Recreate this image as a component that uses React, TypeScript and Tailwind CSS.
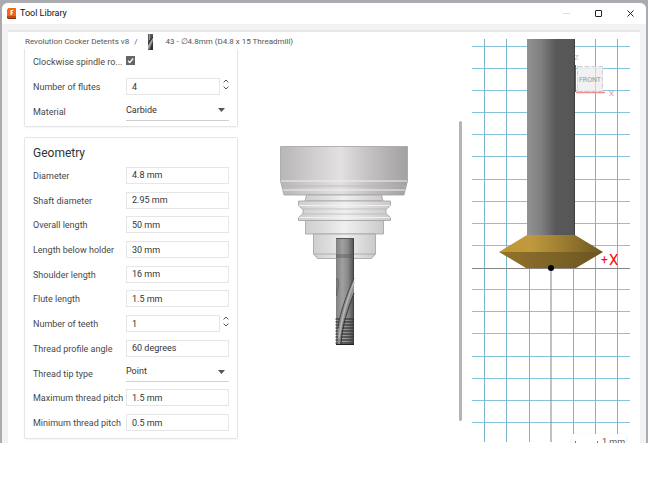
import React, { useState } from "react";

const inputClass =
  "h-[17px] min-w-0 flex-1 border border-[#e6e6e6] bg-white px-[5px] text-[9px] text-[#333] outline-none";

function Row({ id, label, children }: { id: string; label: string; children: React.ReactNode }) {
  return (
    <div className="grid grid-cols-[93px_1fr] items-center">
      <label htmlFor={id} className="whitespace-nowrap pt-px text-[9px] leading-[14px] text-[#484848]">
        {label}
      </label>
      <div className="flex min-w-0 items-center">{children}</div>
    </div>
  );
}

function TextRow({ id, label, value }: { id: string; label: string; value: string }) {
  return (
    <Row id={id} label={label}>
      <input id={id} defaultValue={value} className={inputClass} />
    </Row>
  );
}

function CheckRow({ id, label }: { id: string; label: string }) {
  return (
    <Row id={id} label={label}>
      <div className="grid pb-0.5">
        <input
          id={id}
          type="checkbox"
          defaultChecked
          className="peer col-start-1 row-start-1 size-[9px] appearance-none border border-[#666] bg-white checked:bg-[#666]"
        />
        <svg
          width="9"
          height="9"
          viewBox="0 0 9 9"
          className="pointer-events-none invisible col-start-1 row-start-1 peer-checked:visible"
        >
          <path d="M2 4.700 3.800 6.500 7.200 2.500" fill="none" stroke="#fff" strokeWidth="1.300" />
        </svg>
      </div>
    </Row>
  );
}

function NumberRow({ id, label, initial }: { id: string; label: string; initial: number }) {
  const [value, setValue] = useState(initial);
  return (
    <Row id={id} label={label}>
      <input
        id={id}
        value={value}
        onChange={(e) => setValue(Number(e.target.value) || 0)}
        className={inputClass}
      />
      <div className="flex w-[9px] flex-col items-end gap-[3px] pb-1">
        <button aria-label={`Increase ${label}`} onClick={() => setValue(value + 1)}>
          <svg width="6" height="4" viewBox="0 0 6 4" className="block">
            <path d="M.6 3.400 3 1l2.400 2.400" fill="none" stroke="#555" strokeWidth="1" />
          </svg>
        </button>
        <button aria-label={`Decrease ${label}`} onClick={() => setValue(value - 1)}>
          <svg width="6" height="4" viewBox="0 0 6 4" className="block">
            <path d="M.6.6 3 3 5.400.6" fill="none" stroke="#555" strokeWidth="1" />
          </svg>
        </button>
      </div>
    </Row>
  );
}

function SelectRow({ id, label, options }: { id: string; label: string; options: string[] }) {
  return (
    <Row id={id} label={label}>
      <div className="grid flex-1 items-center border-b border-[#cfcfcf] pb-0.5">
        <select
          id={id}
          className="col-start-1 row-start-1 h-[15px] w-full appearance-none bg-transparent text-[9px] leading-[13px] text-[#333] outline-none"
        >
          {options.map((o) => (
            <option key={o}>{o}</option>
          ))}
        </select>
        <svg
          width="7"
          height="4"
          viewBox="0 0 7 4"
          className="pointer-events-none col-start-1 row-start-1 mr-1 justify-self-end"
        >
          <path d="M0 0h7L3.500 4z" fill="#555" />
        </svg>
      </div>
    </Row>
  );
}

function AppIcon() {
  return (
    <svg width="10" height="12" viewBox="0 0 10 12">
      <path d="M1.500 0H9v9H0V1.500z" fill="#f26a10" />
      <path d="M0 8.500h9V11H1.200L0 10z" fill="#8c2f06" />
      <path d="M1 9.300h8v.8H1z" fill="#e05a0c" />
      <path d="M3.500 2H6.300v1H4.700v1.200h1.300v1H4.700V7H3.500z" fill="#fff" />
    </svg>
  );
}

function ToolIcon() {
  return (
    <svg width="5" height="16" viewBox="0 0 5 16" className="block">
      <rect width="5" height="16" fill="#555" />
      <rect x="1" width="1" height="6" fill="#999" />
      <path d="M0 11 5 4v2L1 15H0z" fill="#a5a5a5" />
      <path d="M0 9 5 2v1L0 11zM2 16l3-8v8z" fill="#2e2e2e" />
    </svg>
  );
}

function HolderDrawing() {
  const threads = Array.from({ length: 9 }, (_, i) => 173 + i * 3);
  return (
    <svg width="128" height="200" viewBox="0 0 128 200" role="img" aria-label="Tool and holder">
      <defs>
        <linearGradient id="body">
          <stop offset="0" stopColor="#b7b5b5" />
          <stop offset=".25" stopColor="#cfcdcd" />
          <stop offset=".47" stopColor="#e2e0e0" />
          <stop offset=".7" stopColor="#c3c1c1" />
          <stop offset="1" stopColor="#a3a0a0" />
        </linearGradient>
        <linearGradient id="neck">
          <stop offset="0" stopColor="#d0cfcf" />
          <stop offset=".25" stopColor="#dedddd" />
          <stop offset=".5" stopColor="#f1f0f0" />
          <stop offset=".8" stopColor="#dad9d9" />
          <stop offset="1" stopColor="#cbc9c9" />
        </linearGradient>
        <linearGradient id="cutter">
          <stop offset="0" stopColor="#808080" />
          <stop offset=".35" stopColor="#a0a0a0" />
          <stop offset=".65" stopColor="#8a8a8a" />
          <stop offset=".92" stopColor="#5c5c5c" />
          <stop offset="1" stopColor="#333" />
        </linearGradient>
      </defs>
      <g stroke="#a3a1a1" strokeWidth=".8">
        <path d="M.5.500h127V35l-3.500 14H4L.5 35z" fill="url(#body)" />
        <path d="M26.500 49h75l1.500 6H25z" fill="url(#neck)" />
        <path d="M18.500 55h92v4.500L106 63.500v4l4.500 4v3H18.500v-3l4.500-4v-4l-4.500-4z" fill="url(#neck)" />
        <path d="M25.500 74.500h78V88h-78z" fill="url(#neck)" />
        <path d="M33.500 88h62v20l-4 4.500h-54l-4-4.500z" fill="url(#neck)" />
        <path d="M33.500 108h62" />
      </g>
      <path d="M1 35h126M3 44h122M19 59.500h91M19 71.500h91" stroke="#f1f1f1" strokeWidth="1.200" />
      <path d="M2 40h124M22 63h84M22 68h84" stroke="#b5b4b4" strokeWidth=".7" />
      <rect x="56" y="92" width="18" height="107" fill="url(#cutter)" />
      <path d="M56 92.500h18" stroke="#555" />
      <rect x="56" y="108" width="18" height="4" fill="#555" opacity=".4" />
      <path d="M57 132c3 4 1 12-.5 18z" fill="#8f8f8f" stroke="#555" strokeWidth=".6" />
      {threads.map((y) => (
        <path key={y} d={`M55.500 ${y}h18.500`} stroke="#333" strokeWidth="1.200" />
      ))}
      <path d="M74 132C67 148 60 166 58 184v15h2c1-21 7-36 14-50z" fill="#8e8e8e" />
      <path d="M74 132C67 148 60 166 58 182" fill="none" stroke="#444" strokeWidth="1" />
      <path d="M74 136C68 152 62 168 59 192" fill="none" stroke="#b5b5b5" strokeWidth="1.500" />
      <path d="M74 147C68 163 62 179 61 199" fill="none" stroke="#333" strokeWidth="1" />
      <path d="M56 198.500h18" stroke="#222" />
    </svg>
  );
}

function ToolPreview() {
  const rows = [8, 30, 52, 74, 96, 118, 141, 163, 185, 207, 251, 273, 295, 318, 340, 362, 384];
  const cols = [12, 34, 57, 101, 123, 145];
  return (
    <svg
      width="158"
      height="403"
      viewBox="0 0 158 403"
      role="img"
      aria-label="Front view"
      className="block font-[Roboto,sans-serif]"
    >
      <defs>
        <linearGradient id="shank">
          <stop offset="0" stopColor="#929292" />
          <stop offset=".3" stopColor="#7f7f7f" />
          <stop offset=".6" stopColor="#585858" />
          <stop offset=".97" stopColor="#565656" />
          <stop offset="1" stopColor="#333" />
        </linearGradient>
        <linearGradient id="goldTop">
          <stop offset="0" stopColor="#bd9636" />
          <stop offset=".3" stopColor="#c09a3c" />
          <stop offset=".65" stopColor="#98792f" />
          <stop offset="1" stopColor="#6e571f" />
        </linearGradient>
        <linearGradient id="goldBottom">
          <stop offset="0" stopColor="#94742a" />
          <stop offset=".4" stopColor="#836728" />
          <stop offset="1" stopColor="#6b5520" />
        </linearGradient>
      </defs>
      {rows.map((y) => (
        <path key={y} d={`M0 ${y - 0.5}h158`} stroke="#86c3dc" strokeWidth="1.200" />
      ))}
      {cols.map((x) => (
        <path key={x} d={`M${x + 0.5} 0v403`} stroke="#79b5cf" strokeWidth="1" />
      ))}
      <path d="M0 229.500h158M79 230v173" stroke="#858585" strokeWidth="1" />
      <rect x="105" y="28" width="26" height="24" fill="#efefef" opacity=".9" />
      <rect x="105.500" y="27.500" width="25" height="25" fill="none" stroke="#cfcfcf" strokeDasharray="5 2" />
      <path d="M123.500 28v24" stroke="#b9c8ce" strokeWidth=".6" />
      <text x="118" y="43" textAnchor="middle" fontSize="7" fill="#999">
        FRONT
      </text>
      <path d="M104 53.500h29" stroke="#f18c8c" strokeWidth="1.500" />
      <text x="137" y="57" fontSize="8" fill="#d99a8e">
        X
      </text>
      <text x="102" y="21" fontSize="8" fill="#a9b8df">
        Z
      </text>
      <rect x="55" y="0" width="48" height="197" fill="url(#shank)" />
      <path d="M103.500 26v27" stroke="#5252d8" />
      <path d="M55 196h48l28 17H27z" fill="url(#goldTop)" />
      <path d="M27 213h104l-27 16H54z" fill="url(#goldBottom)" />
      <circle cx="79" cy="229" r="3" fill="#000" />
      <text x="129" y="225" fontSize="12" fill="#f00d0d">
        +
      </text>
      <text x="137" y="226" fontSize="15" fill="#f00d0d">
        X
      </text>
    </svg>
  );
}

export default function App() {
  return (
    <div className="min-h-screen bg-white font-[Roboto,'Noto_Sans',sans-serif]">
      <div className="bg-[#a9abb1] px-[2px] pt-[3px]">
        <div className="overflow-hidden rounded-t-md bg-[#f3f2f2]">
          <header className="flex h-[21px] items-center bg-white pl-[5px]">
            <AppIcon />
            <h1 className="ml-[3px] flex-1 text-[9px] text-[#111]">Tool Library</h1>
            <div className="flex items-center gap-[25px] pr-3">
              <button aria-label="Minimize" disabled>
                <svg width="7" height="7" viewBox="0 0 7 7" className="block">
                  <path d="M0 3.500h7" stroke="#ddd" />
                </svg>
              </button>
              <button aria-label="Maximize">
                <svg width="7" height="7" viewBox="0 0 7 7" className="block">
                  <rect x=".5" y=".5" width="6" height="6" rx=".5" fill="none" stroke="#222" />
                </svg>
              </button>
              <button aria-label="Close">
                <svg width="7" height="7" viewBox="0 0 7 7" className="block">
                  <path d="M.5.5l6 6M6.500.5l-6 6" stroke="#222" />
                </svg>
              </button>
            </div>
          </header>
          <main className="mx-[6px] mt-[6px] flex overflow-hidden border-t-2 border-[#e6e6e6] bg-white">
            <div className="flex min-w-0 flex-1 flex-col">
              <nav
                aria-label="Breadcrumb"
                className="flex h-[18px] items-center pl-[17px] pt-0.5 text-[8px] text-[#555]"
              >
                <a href="#library">Revolution Cocker Detents v8</a>
                <span className="mx-[5px]">/</span>
                <span className="ml-[6px] mr-[12px]">
                  <ToolIcon />
                </span>
                <span>43 - ∅4.8mm (D4.8 x 15 Threadmill)</span>
              </nav>
              <div className="flex flex-1">
                <form className="w-[246px] shrink-0 px-4 pb-1" onSubmit={(e) => e.preventDefault()}>
                  <section className="-mt-px grid auto-rows-[25px] rounded-b-xs border border-t-0 border-[#e6e6e6] px-2 pb-0.5 shadow-xs">
                    <CheckRow id="spindle" label="Clockwise spindle ro..." />
                    <NumberRow id="flutes" label="Number of flutes" initial={4} />
                    <SelectRow id="material" label="Material" options={["Carbide", "HSS"]} />
                  </section>
                  <section className="mt-[10px] rounded-xs border border-[#e6e6e6] px-2 pb-[3px] pt-[5px] shadow-xs">
                    <h2 className="text-[12px] leading-5 text-[#333]">Geometry</h2>
                    <div className="grid h-[272px] grid-rows-11">
                      <TextRow id="diameter" label="Diameter" value="4.8 mm" />
                      <TextRow id="shaft" label="Shaft diameter" value="2.95 mm" />
                      <TextRow id="overall" label="Overall length" value="50 mm" />
                      <TextRow id="below" label="Length below holder" value="30 mm" />
                      <TextRow id="shoulder" label="Shoulder length" value="16 mm" />
                      <TextRow id="flute" label="Flute length" value="1.5 mm" />
                      <NumberRow id="teeth" label="Number of teeth" initial={1} />
                      <TextRow id="angle" label="Thread profile angle" value="60 degrees" />
                      <SelectRow id="tip" label="Thread tip type" options={["Point", "Flat"]} />
                      <TextRow id="max" label="Maximum thread pitch" value="1.5 mm" />
                      <TextRow id="min" label="Minimum thread pitch" value="0.5 mm" />
                    </div>
                  </section>
                </form>
                <div className="flex flex-1 justify-center pr-[25px] pt-24">
                  <HolderDrawing />
                </div>
                <div className="mb-[22px] mt-[71px] w-[3px] rounded-full bg-[#b5b5b5]" />
              </div>
            </div>
            <aside className="relative mx-[10px] mt-[7px] shrink-0 overflow-hidden">
              <ToolPreview />
              <div className="absolute -bottom-1 right-1 flex h-[13px] w-[54px] items-end gap-1 bg-white pl-[3px] shadow">
                <span className="h-[6px] w-[23px] shrink-0 border-x border-b border-[#777]" />
                <span className="whitespace-nowrap text-[9px] leading-[9px] text-[#555]">1 mm</span>
              </div>
            </aside>
          </main>
        </div>
      </div>
    </div>
  );
}
